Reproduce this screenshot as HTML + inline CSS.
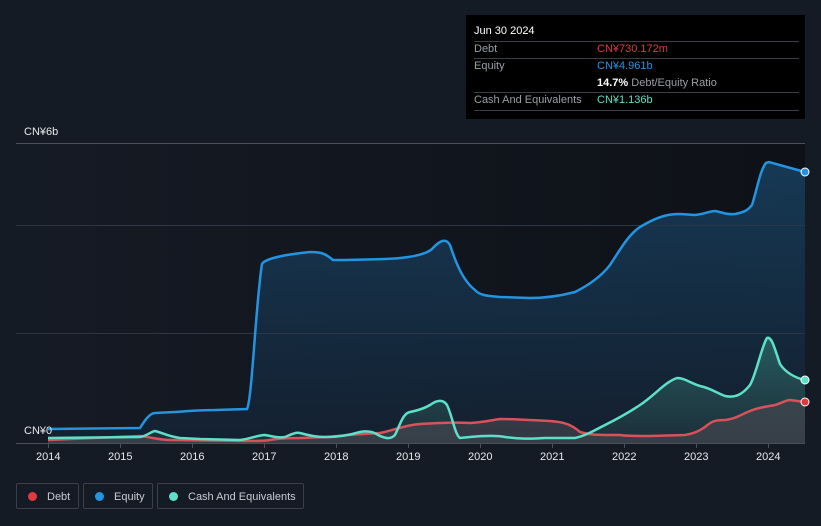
<!DOCTYPE html>
<html><head><meta charset="utf-8"><style>
body{margin:0;width:821px;height:526px;background:#151b25;font-family:"Liberation Sans","Noto Sans CJK SC",sans-serif;overflow:hidden;position:relative}
.tip{position:absolute;left:466px;top:15px;width:339px;height:104px;background:#000;color:#fff;font-size:11px}
.tip .r{position:absolute;left:8px;right:6px;border-top:1px solid #3a3e45}
.tip span{position:absolute}
.lab{color:#9a9ea6}
.leg{position:absolute;top:483px;height:26px;border:1px solid #3a3f49;border-radius:2px;color:#c8ccd3;font-size:11px;line-height:26px;box-sizing:border-box}
.leg i{display:inline-block;width:9px;height:9px;border-radius:50%;margin:0 10px 0 11px;vertical-align:-1px}
.ax{position:absolute;color:#e6e8ec;font-size:11px}
</style></head><body>
<svg width="821" height="526" style="position:absolute;left:0;top:0">
<defs>
<linearGradient id="bg" x1="0" y1="0" x2="1" y2="0"><stop offset="0" stop-color="#151a24"/><stop offset="1" stop-color="#0e1117"/></linearGradient>
<linearGradient id="eq" x1="0" y1="0" x2="0" y2="1"><stop offset="0" stop-color="#17405f" stop-opacity=".85"/><stop offset="1" stop-color="#142234" stop-opacity=".8"/></linearGradient>
<linearGradient id="ca" x1="0" y1="0" x2="0" y2="1"><stop offset="0" stop-color="#2a6a68" stop-opacity=".8"/><stop offset="1" stop-color="#233a40" stop-opacity=".6"/></linearGradient>
</defs>
<rect x="48" y="143" width="757" height="300" fill="url(#bg)"/>
<path d="M48,429 L140,428 C145,420 150,413 155,413 L175,412 C190,411 200,410 215,410 L247,409 C252,400 256,300 262,264 C265,258 290,254 310,252 C320,252 325,253 333,260 L345,260 L385,259 C410,258 425,255 432,249 C440,240 446,238 450,245 C455,260 462,280 475,290 C480,296 490,296 500,297 L530,298 C545,298 560,296 575,292 C585,287 600,278 610,265 C620,250 628,235 640,227 C660,215 670,214 680,214 L695,215 C705,214 710,211 715,211 C722,212 726,215 735,214 C745,212 748,210 752,205 C757,190 760,170 766,163 L769,162 L805,172 L805,443 L48,443Z" fill="url(#eq)"/>
<g stroke="#2c3645" stroke-width="1"><line x1="16" y1="143.5" x2="805" y2="143.5" stroke="#4a4f58"/><line x1="16" y1="225.5" x2="805" y2="225.5"/><line x1="16" y1="333.5" x2="805" y2="333.5"/></g>
<path d="M48,438 L140,437 C147,436 150,432 155,431 C160,432 170,437 180,438 L200,439 L240,440 C250,439 258,435 265,435 C275,437 280,438 285,437 C290,435 295,432 300,433 C308,435 315,437 325,437 C340,437 350,435 360,432 C370,430 375,433 380,436 C385,438 390,440 395,435 C400,425 403,413 410,412 C420,410 425,408 430,405 C437,400 443,399 447,405 C452,415 455,435 460,438 L470,437 C480,436 495,435 505,437 C520,439 530,439 545,438 L575,438 C585,436 595,430 605,425 C615,420 625,415 640,405 C655,395 665,382 677,378 C685,378 690,383 700,386 C710,388 715,392 725,396 C735,398 742,395 750,385 C756,375 762,345 767,338 C772,336 775,350 780,364 C785,372 795,378 805,380 L805,443 L48,443Z" fill="url(#ca)"/>
<path d="M48,440 L140,436 C150,437 160,440 170,440 L245,441 C255,441 265,441 270,440 C280,438 290,438 300,438 L330,437 C345,435 360,434 380,433 C395,430 405,425 420,424 C440,423 450,422 470,423 C485,422 492,420 500,419 C515,419 530,420 550,421 C565,422 572,425 580,432 C590,435 600,435 610,435 L620,435 C625,436 640,436 650,436 L685,435 C692,434 698,432 705,427 C712,421 715,420 725,420 C735,419 740,415 750,411 C760,407 765,407 775,405 C782,403 786,400 790,400 L805,402 L805,443 L48,443Z" fill="#4a4a52" fill-opacity=".6"/>
<path d="M48,440 L140,436 C150,437 160,440 170,440 L245,441 C255,441 265,441 270,440 C280,438 290,438 300,438 L330,437 C345,435 360,434 380,433 C395,430 405,425 420,424 C440,423 450,422 470,423 C485,422 492,420 500,419 C515,419 530,420 550,421 C565,422 572,425 580,432 C590,435 600,435 610,435 L620,435 C625,436 640,436 650,436 L685,435 C692,434 698,432 705,427 C712,421 715,420 725,420 C735,419 740,415 750,411 C760,407 765,407 775,405 C782,403 786,400 790,400 L805,402" fill="none" stroke="#d9525a" stroke-width="2.5"/>
<path d="M48,438 L140,437 C147,436 150,432 155,431 C160,432 170,437 180,438 L200,439 L240,440 C250,439 258,435 265,435 C275,437 280,438 285,437 C290,435 295,432 300,433 C308,435 315,437 325,437 C340,437 350,435 360,432 C370,430 375,433 380,436 C385,438 390,440 395,435 C400,425 403,413 410,412 C420,410 425,408 430,405 C437,400 443,399 447,405 C452,415 455,435 460,438 L470,437 C480,436 495,435 505,437 C520,439 530,439 545,438 L575,438 C585,436 595,430 605,425 C615,420 625,415 640,405 C655,395 665,382 677,378 C685,378 690,383 700,386 C710,388 715,392 725,396 C735,398 742,395 750,385 C756,375 762,345 767,338 C772,336 775,350 780,364 C785,372 795,378 805,380" fill="none" stroke="#5ee0c8" stroke-width="2.5"/>
<path d="M48,429 L140,428 C145,420 150,413 155,413 L175,412 C190,411 200,410 215,410 L247,409 C252,400 256,300 262,264 C265,258 290,254 310,252 C320,252 325,253 333,260 L345,260 L385,259 C410,258 425,255 432,249 C440,240 446,238 450,245 C455,260 462,280 475,290 C480,296 490,296 500,297 L530,298 C545,298 560,296 575,292 C585,287 600,278 610,265 C620,250 628,235 640,227 C660,215 670,214 680,214 L695,215 C705,214 710,211 715,211 C722,212 726,215 735,214 C745,212 748,210 752,205 C757,190 760,170 766,163 L769,162 L805,172" fill="none" stroke="#2394e0" stroke-width="2.5"/>
<line x1="16" y1="443.5" x2="805" y2="443.5" stroke="#4a4f58"/>
<g stroke="#4a4f58"><line x1="48.5" y1="443" x2="48.5" y2="448"/><line x1="120.5" y1="443" x2="120.5" y2="448"/><line x1="192.5" y1="443" x2="192.5" y2="448"/><line x1="264.5" y1="443" x2="264.5" y2="448"/><line x1="336.5" y1="443" x2="336.5" y2="448"/><line x1="408.5" y1="443" x2="408.5" y2="448"/><line x1="480.5" y1="443" x2="480.5" y2="448"/><line x1="552.5" y1="443" x2="552.5" y2="448"/><line x1="624.5" y1="443" x2="624.5" y2="448"/><line x1="696.5" y1="443" x2="696.5" y2="448"/><line x1="768.5" y1="443" x2="768.5" y2="448"/></g>
<circle cx="805" cy="172" r="4" fill="#2394e0" stroke="#fff" stroke-width="1"/>
<circle cx="805" cy="380" r="4" fill="#5ee0c8" stroke="#fff" stroke-width="1"/>
<circle cx="805" cy="402" r="4" fill="#e0393f" stroke="#fff" stroke-width="1"/>
</svg>
<div class="ax" style="left:24px;top:126px">CN¥6b</div>
<div class="ax" style="left:24px;top:425px">CN¥0</div>
<div class="ax" style="left:36px;top:451px">2014</div>
<div class="ax" style="left:108px;top:451px">2015</div>
<div class="ax" style="left:180px;top:451px">2016</div>
<div class="ax" style="left:252px;top:451px">2017</div>
<div class="ax" style="left:324px;top:451px">2018</div>
<div class="ax" style="left:396px;top:451px">2019</div>
<div class="ax" style="left:468px;top:451px">2020</div>
<div class="ax" style="left:540px;top:451px">2021</div>
<div class="ax" style="left:612px;top:451px">2022</div>
<div class="ax" style="left:684px;top:451px">2023</div>
<div class="ax" style="left:756px;top:451px">2024</div>
<div class="tip">
<span style="left:8px;top:10px">Jun 30 2024</span>
<div class="r" style="top:26px"></div>
<span class="lab" style="left:8px;top:28px">Debt</span><span style="left:131px;top:28px;color:#e0393f">CN¥730.172m</span>
<div class="r" style="top:43px"></div>
<span class="lab" style="left:8px;top:45px">Equity</span><span style="left:131px;top:45px;color:#2394e0">CN¥4.961b</span>
<span style="left:131px;top:62px"><b>14.7%</b> <span class="lab" style="position:static">Debt/Equity Ratio</span></span>
<div class="r" style="top:77px"></div>
<span class="lab" style="left:8px;top:79px">Cash And Equivalents</span><span style="left:131px;top:79px;color:#5ee0c8">CN¥1.136b</span>
<div class="r" style="top:95px"></div>
</div>
<div class="leg" style="left:16px;width:63px"><i style="background:#e0393f"></i>Debt</div>
<div class="leg" style="left:83px;width:70px"><i style="background:#2394e0"></i>Equity</div>
<div class="leg" style="left:157px;width:147px"><i style="background:#5ee0c8"></i>Cash And Equivalents</div>
</body></html>
